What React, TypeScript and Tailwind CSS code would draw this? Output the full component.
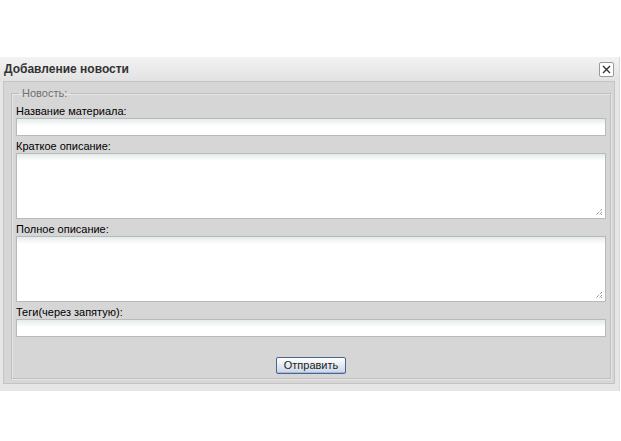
import React from 'react';

const font = { fontFamily: '"Liberation Sans", Arial, sans-serif' };

function Field({ label, multiline }: { label: string; multiline?: boolean }) {
  return (
    <div className="flex flex-col">
      <label className="h-[17px] flex items-end pb-[1px] text-[11px] leading-none text-black">{label}</label>
      {multiline ? (
        <div className="relative h-[66px] border border-[#b9b9b9] bg-[linear-gradient(#e4ebea,#ffffff_7px)]">
          <svg className="absolute right-[2px] bottom-[2px]" width="8" height="8" viewBox="0 0 8 8">
            <path d="M7 1 L1 7 M7 4 L4 7 M7 6 L6 7" stroke="#666" strokeWidth="1" strokeDasharray="1 1" />
          </svg>
        </div>
      ) : (
        <div className="h-[18px] border border-[#b9b9b9] bg-[linear-gradient(#e4ebea,#ffffff_7px)]" />
      )}
    </div>
  );
}

export default function App() {
  return (
    <div className="w-[621px] h-[441px] bg-white pt-[57px]" style={font}>
      <div className="w-[620px] bg-[#e6e6e6] pb-[7px] border-r border-[#d8d8d8]">
        {/* Header */}
        <div className="h-[24px] flex items-center justify-between pl-[4px] pr-[5px] bg-gradient-to-b from-[#f3f3f3] to-[#e2e2e2]">
          <span className="text-[12px] font-bold text-[#333]">Добавление новости</span>
          <button className="w-[15px] h-[15px] mt-[1px] flex items-center justify-center border border-[#9a9a9a] rounded-[2px] bg-white">
            <svg width="9" height="9" viewBox="0 0 9 9">
              <path d="M1 1 L8 8 M8 1 L1 8" stroke="#333" strokeWidth="1.4" />
            </svg>
          </button>
        </div>

        {/* Body */}
        <div className="ml-[3px] mr-[4px] border border-[#c4c4c4] bg-[#d6d6d6] pl-[7px] pr-[3px] pt-[5px] pb-[4px]">
          <fieldset className="border border-[#bfbfbf] shadow-[inset_1px_1px_0_#e6e6e6,1px_1px_0_#e6e6e6] px-[4px] pb-[4px]">
            <legend className="ml-[3px] px-[3px] text-[11px] leading-[13px] text-[#6f6f6f]">Новость:</legend>
            <div className="flex flex-col mt-[1px]">
              <Field label="Название материала:" />
              <Field label="Краткое описание:" multiline />
              <Field label="Полное описание:" multiline />
              <Field label="Теги(через запятую):" />
              <div className="flex justify-center pt-[20px]">
                <button className="w-[70px] h-[17px] rounded-[2px] border border-[#4a6591] bg-gradient-to-b from-white to-[#c9d5e6] text-[11px] leading-none text-[#222] shadow-[inset_0_-1px_0_#a9b9d3]">
                  Отправить
                </button>
              </div>
            </div>
          </fieldset>
        </div>
      </div>
    </div>
  );
}
